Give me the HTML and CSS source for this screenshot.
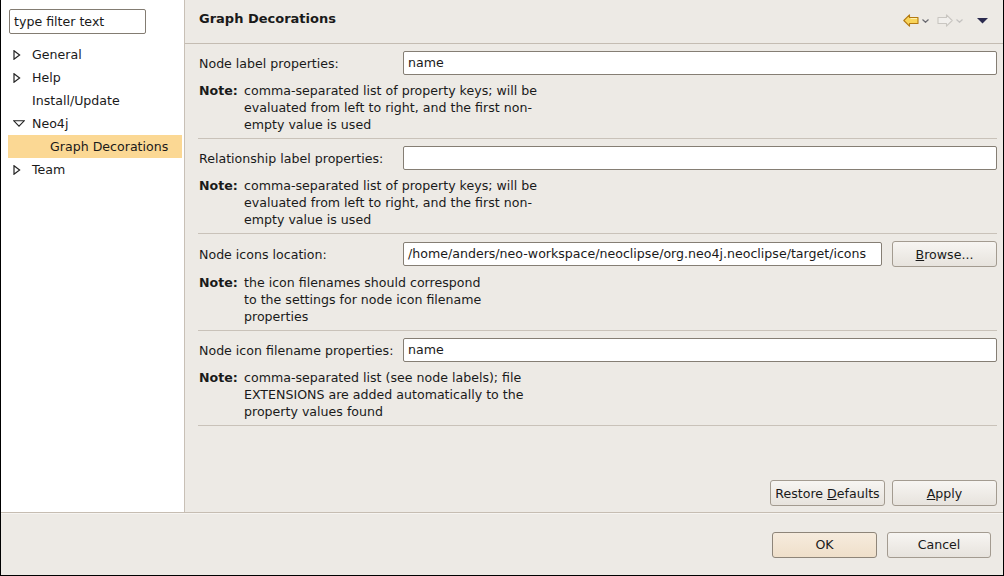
FILE: index.html
```html
<!DOCTYPE html>
<html>
<head>
<meta charset="utf-8">
<link rel="stylesheet" href="styles.css">
</head>
<body>
<div class="window">
  <div class="main">
    <aside class="sidebar">
      <div class="filter">type filter text</div>
      <ul class="tree">
        <li class="row"><span class="exp"><svg width="8" height="10" viewBox="0 0 8 10"><path d="M1 0.8 L6.6 5 L1 9.2 Z" fill="none" stroke="#222" stroke-width="1.2" stroke-linejoin="miter"/></svg></span>General</li>
        <li class="row"><span class="exp"><svg width="8" height="10" viewBox="0 0 8 10"><path d="M1 0.8 L6.6 5 L1 9.2 Z" fill="none" stroke="#222" stroke-width="1.2"/></svg></span>Help</li>
        <li class="row"><span class="exp"></span>Install/Update</li>
        <li class="row"><span class="exp"><svg width="12" height="7" viewBox="0 0 12 7"><path d="M0.8 0.8 L11.2 0.8 L6 6.2 Z" fill="none" stroke="#222" stroke-width="1.1"/></svg></span>Neo4j</li>
        <li class="row child selected">Graph Decorations</li>
        <li class="row"><span class="exp"><svg width="8" height="10" viewBox="0 0 8 10"><path d="M1 0.8 L6.6 5 L1 9.2 Z" fill="none" stroke="#222" stroke-width="1.2"/></svg></span>Team</li>
      </ul>
    </aside>
    <section class="content">
      <header class="header">
        <h1 class="title">Graph Decorations</h1>
        <div class="toolbar">
          <svg class="tb-arrow" width="16" height="13" viewBox="0 0 16 13"><path d="M0.8 6.5 L6.5 0.8 L6.5 3.5 L15 3.5 L15 9.5 L6.5 9.5 L6.5 12.2 Z" fill="#f8d45a" stroke="#b47a12" stroke-width="1.1" stroke-linejoin="round"/><path d="M7.5 4.6 L14 4.6" stroke="#fff4b8" stroke-width="1"/></svg>
          <svg class="tb-chev" width="7" height="4" viewBox="0 0 7 4"><path d="M0.5 0.5 L3.5 3.3 L6.5 0.5" fill="none" stroke="#6b6b72" stroke-width="1.2"/></svg>
          <svg class="tb-arrow fwd" width="16" height="13" viewBox="0 0 16 13"><path d="M15.2 6.5 L9.5 0.8 L9.5 3.5 L1 3.5 L1 9.5 L9.5 9.5 L9.5 12.2 Z" fill="#f1efec" stroke="#c9c6c1" stroke-width="1.1" stroke-linejoin="round"/></svg>
          <svg class="tb-chev" width="7" height="4" viewBox="0 0 7 4"><path d="M0.5 0.5 L3.5 3.3 L6.5 0.5" fill="none" stroke="#c4c2c0" stroke-width="1.2"/></svg>
          <svg class="tb-menu" width="11" height="6" viewBox="0 0 11 6"><path d="M0 0 L11 0 L5.5 5.5 Z" fill="#2b2a4e"/></svg>
        </div>
      </header>
      <div class="body">
        <div class="section">
          <div class="field-row">
            <label class="label">Node label properties:</label>
            <div class="input">name</div>
          </div>
          <div class="note"><b class="note-key">Note:</b><span class="note-text">comma-separated list of property keys; will be<br>evaluated from left to right, and the first non-<br>empty value is used</span></div>
        </div>
        <div class="section">
          <div class="field-row">
            <label class="label">Relationship label properties:</label>
            <div class="input"></div>
          </div>
          <div class="note"><b class="note-key">Note:</b><span class="note-text">comma-separated list of property keys; will be<br>evaluated from left to right, and the first non-<br>empty value is used</span></div>
        </div>
        <div class="section">
          <div class="field-row tall">
            <label class="label">Node icons location:</label>
            <div class="input">/home/anders/neo-workspace/neoclipse/org.neo4j.neoclipse/target/icons</div>
            <button class="btn browse"><u>B</u>rowse...</button>
          </div>
          <div class="note"><b class="note-key">Note:</b><span class="note-text">the icon filenames should correspond<br>to the settings for node icon filename<br>properties</span></div>
        </div>
        <div class="section">
          <div class="field-row">
            <label class="label">Node icon filename properties:</label>
            <div class="input">name</div>
          </div>
          <div class="note"><b class="note-key">Note:</b><span class="note-text">comma-separated list (see node labels); file<br>EXTENSIONS are added automatically to the<br>property values found</span></div>
        </div>
        <div class="actions">
          <button class="btn restore">Restore <u>D</u>efaults</button>
          <button class="btn apply"><u>A</u>pply</button>
        </div>
      </div>
    </section>
  </div>
  <footer class="footer">
    <button class="btn ok">OK</button>
    <button class="btn cancel">Cancel</button>
  </footer>
</div>
</body>
</html>
```
FILE: styles.css
```css
* { box-sizing: border-box; }
html, body { margin: 0; padding: 0; }
body {
  font-family: "DejaVu Sans", "Liberation Sans", sans-serif;
  font-size: 12.6px;
  color: #1a1a1a;
  background: #000;
}
.window {
  width: 1004px;
  height: 576px;
  background: #edeae5;
  border-left: 1px solid #000;
  border-right: 1px solid #000;
  border-bottom: 1px solid #000;
  display: flex;
  flex-direction: column;
}
.main {
  height: 513px;
  display: flex;
  border-bottom: 1px solid #c6bdb2;
}
.sidebar {
  flex: none;
  width: 184px;
  background: #fff;
  border-right: 1px solid #c8c0b6;
  padding: 9px 0 0 0;
}
.filter {
  margin-left: 8px;
  width: 137px;
  height: 25px;
  border: 1px solid #837c72;
  border-radius: 2px;
  padding: 0 4px;
  line-height: 23px;
  background: #fff;
}
.tree {
  list-style: none;
  margin: 9px 0 0 0;
  padding: 0;
}
.row {
  height: 23px;
  line-height: 23px;
  display: flex;
  align-items: center;
  padding-left: 10px;
  white-space: nowrap;
}
.exp {
  width: 21px;
  display: flex;
  align-items: center;
  justify-content: flex-start;
  padding-left: 2px;
}
.row.child {
  margin-left: 7px;
  margin-right: 2px;
  padding-left: 42px;
}
.row.selected {
  background: #fbd894;
}
.content {
  flex: 1;
  min-width: 0;
  display: flex;
  flex-direction: column;
}
.header {
  height: 44px;
  display: flex;
  align-items: center;
  justify-content: space-between;
  padding: 0 15px 6px 13px;
  border-bottom: 1px solid #c4bcb2;
}
.title {
  margin: 0;
  font-size: 13px;
  font-weight: bold;
  padding-left: 1px;
}
.toolbar {
  display: flex;
  align-items: center;
  padding-top: 4px;
}
.tb-chev { margin: 1px 8px 0 3px; }
.tb-chev + .tb-menu { margin-left: 6px; }
.body {
  flex: 1;
  display: flex;
  flex-direction: column;
  padding: 0 6px 6px 13px;
}
.section {
  padding: 7px 0 5px 0;
  border-bottom: 1px solid #c9c2b9;
}
.field-row {
  display: flex;
  align-items: center;
  height: 24px;
}
.field-row.tall { height: 26px; }
.label {
  width: 205px;
  flex: none;
  padding-left: 1px;
}
.input {
  flex: 1;
  min-width: 0;
  height: 24px;
  border: 1px solid #857e74;
  border-radius: 2px;
  background: #fff;
  padding: 0 4px;
  line-height: 22px;
  white-space: nowrap;
  overflow: hidden;
}
.note {
  display: flex;
  margin-top: 7px;
  line-height: 17px;
}
.note-key {
  width: 46px;
  flex: none;
  padding-left: 1px;
}
.btn {
  font-family: inherit;
  font-size: 12.6px;
  color: #1a1a1a;
  height: 26px;
  border: 1px solid #a39b90;
  border-radius: 3px;
  background: linear-gradient(#f7f5f2, #e7e3dd);
  padding: 0;
  flex: none;
}
.browse { width: 105px; margin-left: 10px; }
.actions {
  margin-top: auto;
  display: flex;
  justify-content: flex-end;
  gap: 7px;
}
.restore { width: 115px; }
.apply { width: 105px; }
.footer {
  flex: 1;
  display: flex;
  align-items: center;
  justify-content: flex-end;
  gap: 10px;
  padding-right: 12px;
  border-top: 1px solid #f6f4f1;
}
.ok {
  width: 105px;
  border-color: #8e8579;
  background: linear-gradient(#f6ebdd, #efdfca);
}
.cancel { width: 104px; }
```
